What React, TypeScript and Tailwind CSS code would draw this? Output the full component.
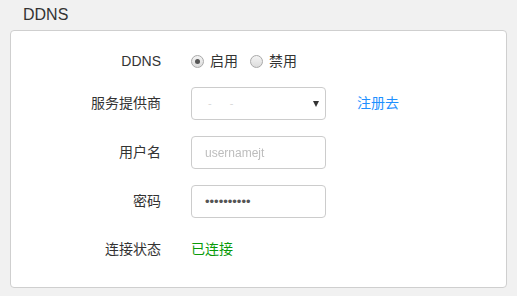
import { FC, ReactNode } from "react";

const font = { fontFamily: '"Liberation Sans", "Noto Sans CJK SC", sans-serif' };

const Row: FC<{ label: string; className?: string; children: ReactNode }> = ({
  label,
  className = "",
  children,
}) => (
  <div className={`flex h-[33px] items-center ${className}`}>
    <div className="w-[150px] text-right text-[14px] text-[#333]">{label}</div>
    <div className="ml-[30px] flex items-center">{children}</div>
  </div>
);

const Radio: FC<{ checked?: boolean; label: string }> = ({ checked, label }) => (
  <label className="flex items-center">
    <span className="flex h-[13px] w-[13px] items-center justify-center rounded-full border border-[#a9a9a9] bg-gradient-to-b from-[#f4f4f4] to-[#dcdcdc]">
      {checked && <span className="h-[5px] w-[5px] rounded-full bg-[#555]" />}
    </span>
    <span className="ml-[6px] text-[14px] text-[#333]">{label}</span>
  </label>
);

const App: FC = () => {
  return (
    <div className="h-[296px] w-[517px] bg-[#f1f1f1]" style={font}>
      <div className="h-[30px] pl-[23px] pt-[4px] text-[16px] leading-[22px] text-[#333]">
        DDNS
      </div>
      <section className="mx-[10px] h-[258px] rounded-[4px] border border-[#cfcfcf] bg-white pt-[14px]">
        <Row label="DDNS">
          <Radio checked label="启用" />
          <div className="w-[12px]" />
          <Radio label="禁用" />
        </Row>
        <Row label="服务提供商" className="mt-[9px]">
          <div className="relative flex h-[33px] w-[135px] items-center rounded-[4px] border border-[#ccc] pl-[16px]">
            <span className="text-[11px] tracking-[4px] text-[#d8d8d8]">- &nbsp;-</span>
            <span className="absolute right-[6px] top-[13px] h-0 w-0 border-x-[3px] border-t-[6px] border-x-transparent border-t-[#333]" />
          </div>
          <a className="ml-[31px] text-[14px] text-[#1e90ff]">注册去</a>
        </Row>
        <Row label="用户名" className="mt-[16px]">
          <div className="flex h-[33px] w-[135px] items-center rounded-[4px] border border-[#ccc] pl-[13px]">
            <span className="text-[12px] text-[#bdbdbd] blur-[0.7px]">usernamejt</span>
          </div>
        </Row>
        <Row label="密码" className="mt-[16px]">
          <div className="flex h-[33px] w-[135px] items-center rounded-[4px] border border-[#ccc] pl-[13px]">
            <span className="text-[13px] text-[#555]">••••••••••</span>
          </div>
        </Row>
        <Row label="连接状态" className="mt-[15px]">
          <span className="text-[14px] text-[#0a9a0a]">已连接</span>
        </Row>
      </section>
    </div>
  );
};

export default App;
